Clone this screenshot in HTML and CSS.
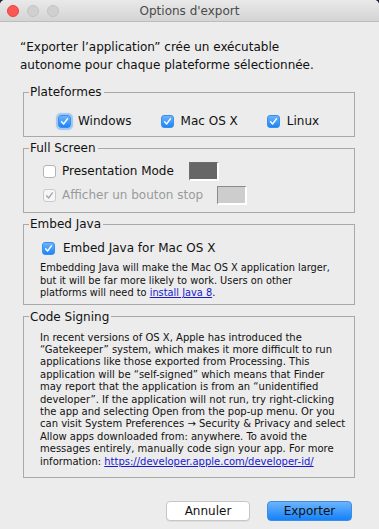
FILE: index.html
```html
<!DOCTYPE html>
<html lang="fr">
<head>
<meta charset="utf-8">
<title>Options d'export</title>
<link rel="stylesheet" href="styles.css">
</head>
<body>
<div class="window">
  <div class="titlebar">
    <div class="lights">
      <span class="light red"></span>
      <span class="light grey"></span>
      <span class="light grey"></span>
    </div>
    <div class="title">Options d'export</div>
    <div class="spacer"></div>
  </div>
  <div class="content">
    <p class="intro">“Exporter l’application” crée un exécutable<br>autonome pour chaque plateforme sélectionnée.</p>

    <fieldset class="group platforms">
      <legend>Plateformes</legend>
      <div class="platform-row">
        <label class="check"><span class="cb on focus"><svg viewBox="0 0 13 13"><path d="M3.6 6.8 L5.6 9 L9.4 3.8"/></svg></span>Windows</label>
        <label class="check"><span class="cb on"><svg viewBox="0 0 13 13"><path d="M3.6 6.8 L5.6 9 L9.4 3.8"/></svg></span>Mac OS X</label>
        <label class="check"><span class="cb on"><svg viewBox="0 0 13 13"><path d="M3.6 6.8 L5.6 9 L9.4 3.8"/></svg></span>Linux</label>
      </div>
    </fieldset>

    <fieldset class="group fullscreen">
      <legend>Full Screen</legend>
      <div class="fs-row">
        <label class="check"><span class="cb off"></span>Presentation Mode</label>
        <span class="swatch dark"></span>
      </div>
      <div class="fs-row disabled">
        <label class="check"><span class="cb dis"><svg viewBox="0 0 13 13"><path d="M3.6 6.8 L5.6 9 L9.4 3.8"/></svg></span>Afficher un bouton stop</label>
        <span class="swatch light-sw"></span>
      </div>
    </fieldset>

    <fieldset class="group embed">
      <legend>Embed Java</legend>
      <div class="embed-row">
        <label class="check"><span class="cb on"><svg viewBox="0 0 13 13"><path d="M3.6 6.8 L5.6 9 L9.4 3.8"/></svg></span>Embed Java for Mac OS X</label>
      </div>
      <p class="small embed-text">Embedding Java will make the Mac OS X application larger,<br>but it will be far more likely to work. Users on other<br>platforms will need to <a href="#">install Java 8</a>.</p>
    </fieldset>

    <fieldset class="group signing">
      <legend>Code Signing</legend>
      <p class="small sign-text">In recent versions of OS X, Apple has introduced the<br>“Gatekeeper” system, which makes it more difficult to run<br>applications like those exported from Processing. This<br>application will be “self-signed” which means that Finder<br>may report that the application is from an “unidentified<br>developer”. If the application will not run, try right-clicking<br>the app and selecting Open from the pop-up menu. Or you<br>can visit System Preferences → Security &amp; Privacy and select<br>Allow apps downloaded from: anywhere. To avoid the<br>messages entirely, manually code sign your app. For more<br>information: <a href="#">https://developer.apple.com/developer-id/</a></p>
    </fieldset>

    <div class="buttons">
      <button class="btn">Annuler</button>
      <button class="btn primary">Exporter</button>
    </div>
  </div>
</div>
</body>
</html>
```

FILE: styles.css
```css
html {
  background: #1e2233;
}
body {
  margin: 0;
  font-family: "DejaVu Sans", "Noto Sans", sans-serif;
  color: #111;
}
.window {
  width: 379px;
  height: 529px;
  background: #ececec;
  border-radius: 5px 5px 0 0;
  overflow: hidden;
}
.titlebar {
  height: 21px;
  border-bottom: 1px solid #bdbdbd;
  background: linear-gradient(#e9e9e9, #d4d4d4);
  display: grid;
  grid-template-columns: 1fr auto 1fr;
  align-items: center;
}
.lights {
  display: flex;
  gap: 8px;
  padding-left: 7px;
}
.light {
  width: 12px;
  height: 12px;
  border-radius: 50%;
  box-sizing: border-box;
}
.light.red {
  background: #fc5753;
  border: 1px solid #df4744;
}
.light.grey {
  background: #d0d0d0;
  border: 1px solid #c2c2c2;
}
.title {
  font-size: 12px;
  color: #4a4a4a;
}
.content {
  padding-top: 16px;
}
.intro {
  margin: 0 0 10px 20px;
  font-size: 12px;
  line-height: 18px;
}
.group {
  margin: 0 24px 0 23px;
  padding: 0 0 5px 5px;
  border: 1px solid #a9a9a9;
  min-width: 0;
}
.group legend {
  font-size: 12px;
  line-height: 16px;
  padding: 0 2px 0 1px;
  margin: 0;
}
.check {
  display: inline-flex;
  align-items: center;
  font-size: 12px;
  line-height: 20px;
}
.cb {
  width: 13px;
  height: 13px;
  box-sizing: border-box;
  border-radius: 3px;
  display: inline-flex;
  margin-right: 6px;
  flex: none;
}
.cb svg {
  width: 13px;
  height: 13px;
  fill: none;
  stroke-width: 1.4;
  stroke-linecap: round;
  stroke-linejoin: round;
}
.cb.on {
  background: linear-gradient(#6db3fb, #1a86fb);
  border: 1px solid #3c8fe6;
}
.cb.on svg {
  stroke: #fff;
  margin: -1px;
}
.cb.focus {
  box-shadow: 0 0 0 2px rgba(110, 170, 245, 0.45), 0 0 2px 2px rgba(130, 185, 250, 0.3);
}
.cb.off {
  background: #fff;
  border: 1px solid #b3b3b3;
}
.cb.dis {
  background: #f6f6f6;
  border: 1px solid #c9c9c9;
}
.cb.dis svg {
  stroke: #a8a8a8;
  margin: -1px;
}
.platform-row {
  display: flex;
  gap: 29px;
  margin: 11px 0 0 29px;
  height: 20px;
  align-items: center;
}
.platform-row .cb {
  margin-right: 7px;
}
.fullscreen .fs-row:first-of-type {
  margin-top: 3px;
}
.fs-row {
  height: 24px;
  display: flex;
  align-items: center;
  margin-left: 14px;
}
.fs-row.disabled .check {
  color: #9a9a9a;
}
.swatch {
  width: 30px;
  height: 19px;
  box-sizing: border-box;
  margin-left: 15px;
  border-style: solid;
  border-width: 1px 2px 2px 1px;
  border-color: #6e6e6e #fff #fff #6e6e6e;
}
.swatch.dark {
  background: #666;
}
.swatch.light-sw {
  background: #cdcdcd;
  border-color: #8a8a8a #fff #fff #8a8a8a;
  margin-left: 14px;
}
.embed-row {
  margin: 6px 0 0 13px;
  height: 20px;
  display: flex;
  align-items: center;
}
.embed-row .cb {
  margin-right: 8px;
}
.small {
  font-size: 10px;
  margin: 0 0 0 11px;
}
.small a {
  color: #1a1ad0;
}
.embed-text {
  font-size: 9.8px;
  line-height: 12.5px;
  margin-top: 4px;
}
.embed {
  padding-bottom: 4px;
}
.embed,
.fullscreen,
.signing {
  margin-top: 3px;
}
.signing {
  margin-top: 4px;
  padding-bottom: 9px;
}
.sign-text {
  line-height: 12.4px;
  margin-top: 7px;
}
.buttons {
  display: flex;
  justify-content: flex-end;
  gap: 17px;
  margin: 23px 27px 0 0;
}
.btn {
  height: 20px;
  font-family: "DejaVu Sans", sans-serif;
  font-size: 12px;
  color: #111;
  border-radius: 4px;
  padding: 0;
  box-sizing: border-box;
}
.btn:not(.primary) {
  width: 84px;
  background: #fff;
  border: 1px solid #c6c6c6;
  box-shadow: 0 1px 0 rgba(0, 0, 0, 0.06);
}
.btn.primary {
  width: 85px;
  background: linear-gradient(#6cb4fb, #1482fa);
  border: 1px solid #3b8de6;
}
```
